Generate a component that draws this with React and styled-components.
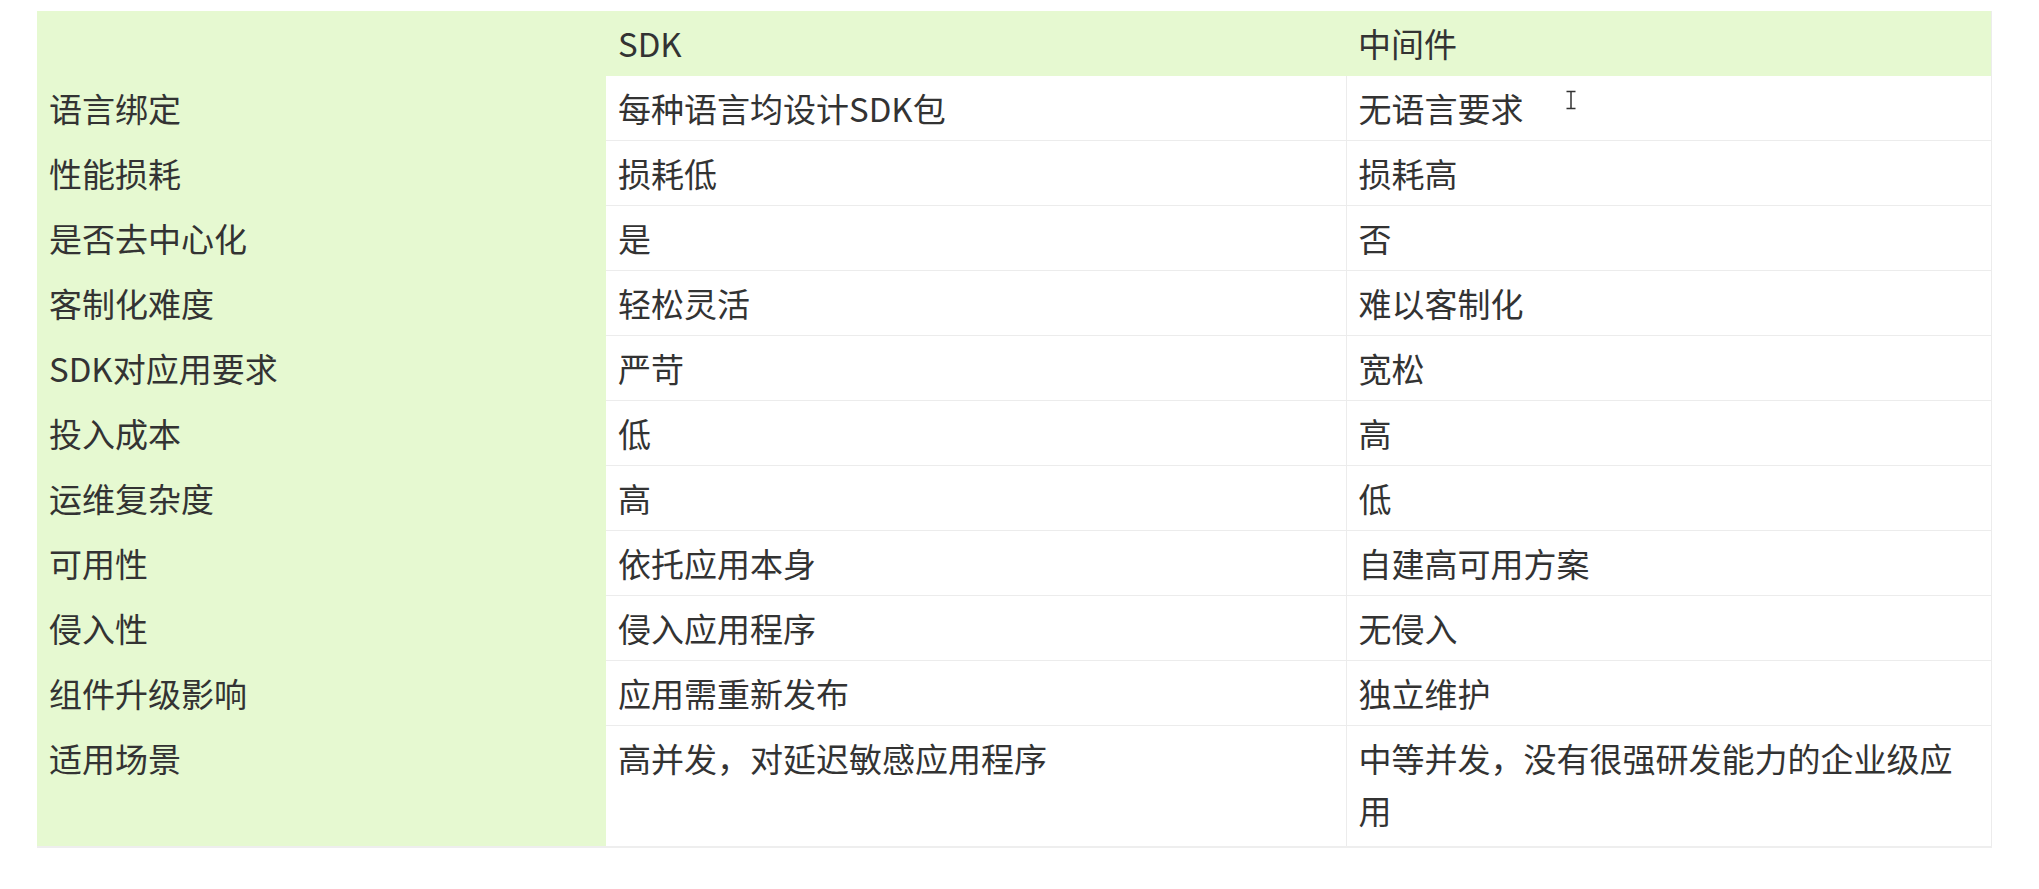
import React from 'react';
import styled, { createGlobalStyle } from 'styled-components';

const GlobalStyle = createGlobalStyle`
  html, body {
    margin: 0;
    padding: 0;
    background: #fff;
  }
  body {
    font-family: "Noto Sans CJK SC", "Noto Sans", sans-serif;
    color: #333;
  }
`;

const Page = styled.div`
  position: relative;
  padding: 11px 48px 0 37px;
`;

const Table = styled.table`
  width: 100%;
  border-collapse: collapse;
  table-layout: fixed;
  font-size: 33px;
  line-height: 52px;
  border-right: 1px solid #ececec;
  border-bottom: 2px solid #eeeeee;
`;

const HeadCell = styled.th`
  background-color: #e6f9d1;
  font-weight: 400;
  text-align: left;
  padding: 6px 12px 7px;
  vertical-align: middle;
`;

const Cell = styled.td`
  background-color: ${props => (props.$label ? '#e6f9d1' : '#fff')};
  padding: 6px 12px 6px;
  vertical-align: top;
  border-bottom: ${props => (props.$label ? '1px solid #e6f9d1' : '1px solid #ececec')};
  border-left: ${props => (props.$divided ? '1px solid #ececec' : 'none')};
`;

const TallRow = styled.tr`
  td {
    padding-bottom: 10px;
    border-bottom: none;
  }
`;

// text cursor caught in the screenshot
const Cursor = styled.svg`
  position: absolute;
  left: 1565px;
  top: 90px;
`;

const rows = [
  ['语言绑定', '每种语言均设计SDK包', '无语言要求'],
  ['性能损耗', '损耗低', '损耗高'],
  ['是否去中心化', '是', '否'],
  ['客制化难度', '轻松灵活', '难以客制化'],
  ['SDK对应用要求', '严苛', '宽松'],
  ['投入成本', '低', '高'],
  ['运维复杂度', '高', '低'],
  ['可用性', '依托应用本身', '自建高可用方案'],
  ['侵入性', '侵入应用程序', '无侵入'],
  ['组件升级影响', '应用需重新发布', '独立维护'],
];

const last = ['适用场景', '高并发，对延迟敏感应用程序', '中等并发，没有很强研发能力的企业级应用'];

function App() {
  return (
    <Page>
      <GlobalStyle />
      <Table>
        <colgroup>
          <col width="569" />
          <col width="740" />
          <col width="645" />
        </colgroup>
        <thead>
          <tr>
            <HeadCell />
            <HeadCell>SDK</HeadCell>
            <HeadCell>中间件</HeadCell>
          </tr>
        </thead>
        <tbody>
          {rows.map(r => (
            <tr key={r[0]}>
              <Cell $label>{r[0]}</Cell>
              <Cell>{r[1]}</Cell>
              <Cell $divided>{r[2]}</Cell>
            </tr>
          ))}
          <TallRow>
            <Cell $label>{last[0]}</Cell>
            <Cell>{last[1]}</Cell>
            <Cell $divided>{last[2]}</Cell>
          </TallRow>
        </tbody>
      </Table>
      <Cursor width="12" height="20" viewBox="0 0 12 20">
        <path d="M1.5 1.5h9M6 1.5v17M1.5 18.5h9" stroke="#333" strokeWidth="1.5" fill="none" />
      </Cursor>
    </Page>
  );
}

export default App;
